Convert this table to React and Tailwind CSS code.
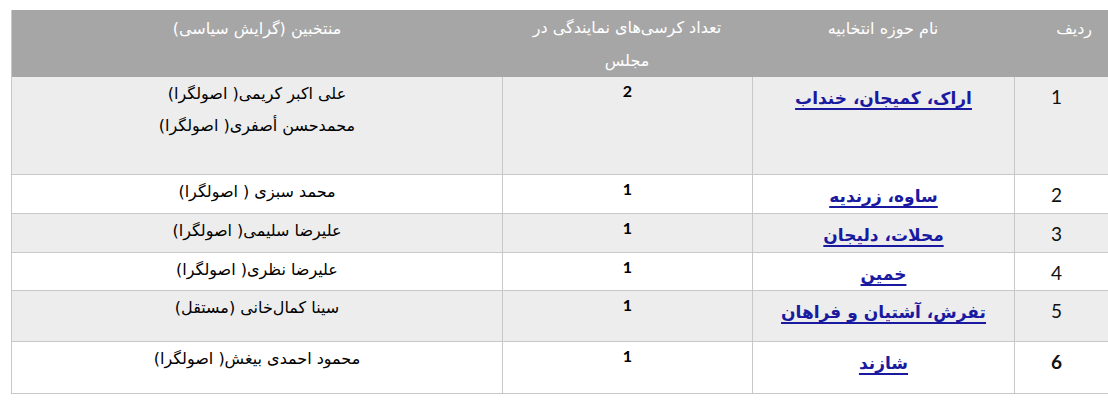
import React from "react";

const rows = [
  { n: "1", area: "اراک، کمیجان، خنداب", seats: "2", names: ["علی اکبر کریمی( اصولگرا)", "محمدحسن أصفری( اصولگرا)"], h: "h-[98px]", bg: "bg-[#ededed]" },
  { n: "2", area: "ساوه، زرندیه", seats: "1", names: ["محمد سبزی ( اصولگرا)"], h: "h-[39px]", bg: "bg-white" },
  { n: "3", area: "محلات، دلیجان", seats: "1", names: ["علیرضا سلیمی( اصولگرا)"], h: "h-[39px]", bg: "bg-[#ededed]" },
  { n: "4", area: "خمین", seats: "1", names: ["علیرضا نظری( اصولگرا)"], h: "h-[38px]", bg: "bg-white" },
  { n: "5", area: "تفرش، آشتیان و فراهان", seats: "1", names: ["سینا کمال‌خانی (مستقل)"], h: "h-[51px]", bg: "bg-[#ededed]" },
  { n: "6", area: "شازند", seats: "1", names: ["محمود احمدی بیغش( اصولگرا)"], h: "h-[52px]", bg: "bg-white", bold: true },
];

const ar = { fontFamily: '"DejaVu Sans", sans-serif' };
const num = { fontFamily: 'Lato, "Open Sans", sans-serif' };

export default function App() {
  return (
    <div className="w-[1108px] h-[407px] bg-white pt-[10px] pl-[11px] overflow-hidden">
      <div dir="rtl" className="w-[1097px] border-l border-[#c8c8c8]">
        <div className="grid grid-cols-[94px_262px_250px_490px] h-[67px] bg-[#a6a6a6] text-white text-[16px] leading-[33px]" style={ar}>
          <div className="pr-[16px] pt-[2px]">ردیف</div>
          <div className="text-center pt-[2px]">نام حوزه انتخابیه</div>
          <div className="text-center px-[24px] pt-[1px]">تعداد کرسی‌های نمایندگی در مجلس</div>
          <div className="text-center pt-[2px]">منتخبین (گرایش سیاسی)</div>
        </div>
        {rows.map((r) => (
          <div key={r.n} className={`grid grid-cols-[94px_262px_250px_490px] ${r.h} ${r.bg} border-b border-[#c8c8c8]`}>
            <div className="border-l border-[#c8c8c8] pr-[46px] pt-[6px]">
              <span className={`text-[19px] text-[#111] ${r.bold ? "font-bold" : ""}`} style={num}>{r.n}</span>
            </div>
            <div className="border-l border-[#c8c8c8] text-center pt-[7px]">
              <a className="text-[17px] font-bold text-[#1a1aa0] underline decoration-[1.5px] underline-offset-[4px] leading-[28px]" style={ar}>{r.area}</a>
            </div>
            <div className="border-l border-[#c8c8c8] text-center pt-[2px]">
              <span className="text-[16px] font-bold text-black leading-[22px]" style={num}>{r.seats}</span>
            </div>
            <div className="text-center pt-[1px] text-[16px] text-black leading-[32px]" style={ar}>
              {r.names.map((nm) => (
                <div key={nm}>{nm}</div>
              ))}
            </div>
          </div>
        ))}
      </div>
    </div>
  );
}
